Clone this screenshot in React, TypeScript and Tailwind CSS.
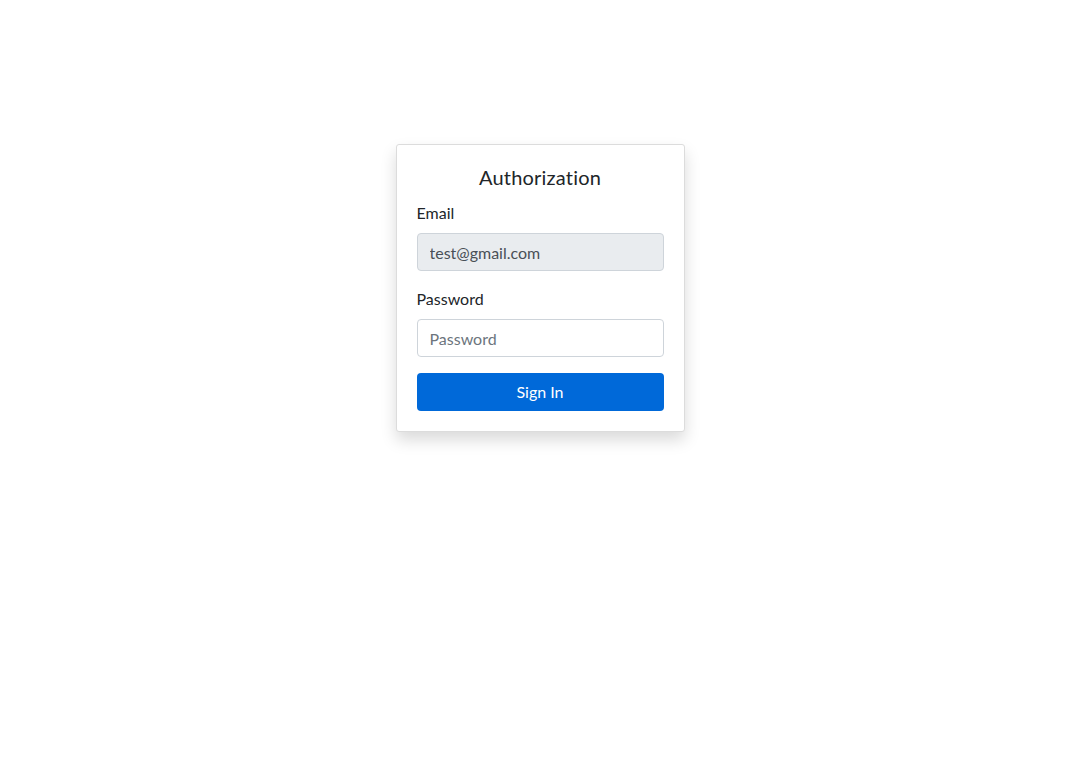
export default function App() {
  return (
    <div
      className="min-h-screen bg-white flex justify-center pt-[144px] text-[#212529]"
      style={{ fontFamily: "Lato, 'Noto Sans', sans-serif" }}
    >
      <div className="w-[289px] h-fit bg-white border border-[#dcdcdc] rounded-[3px] shadow-[0_8px_16px_rgba(0,0,0,0.15)] p-5">
        <h1 className="text-[20px] leading-[24px] text-center mb-3 tracking-[0.2px]">Authorization</h1>
        <div className="mb-4">
          <label className="block text-[16px] leading-[24px] mb-2">Email</label>
          <input
            disabled
            value="test@gmail.com"
            className="w-full h-[38px] px-3 text-[16px] text-[#495057] bg-[#e9ecef] border border-[#ced4da] rounded-[4px] outline-none"
            style={{ fontFamily: "inherit" }}
          />
        </div>
        <div className="mb-4">
          <label className="block text-[16px] leading-[24px] mb-2">Password</label>
          <input
            type="password"
            placeholder="Password"
            className="w-full h-[38px] px-3 text-[16px] text-[#495057] bg-white border border-[#ced4da] rounded-[4px] outline-none placeholder:text-[#6c757d]"
            style={{ fontFamily: "inherit" }}
          />
        </div>
        <button className="w-full h-[38px] rounded-[4px] bg-[#0069d9] text-white text-[16px]">
          Sign In
        </button>
      </div>
    </div>
  );
}
